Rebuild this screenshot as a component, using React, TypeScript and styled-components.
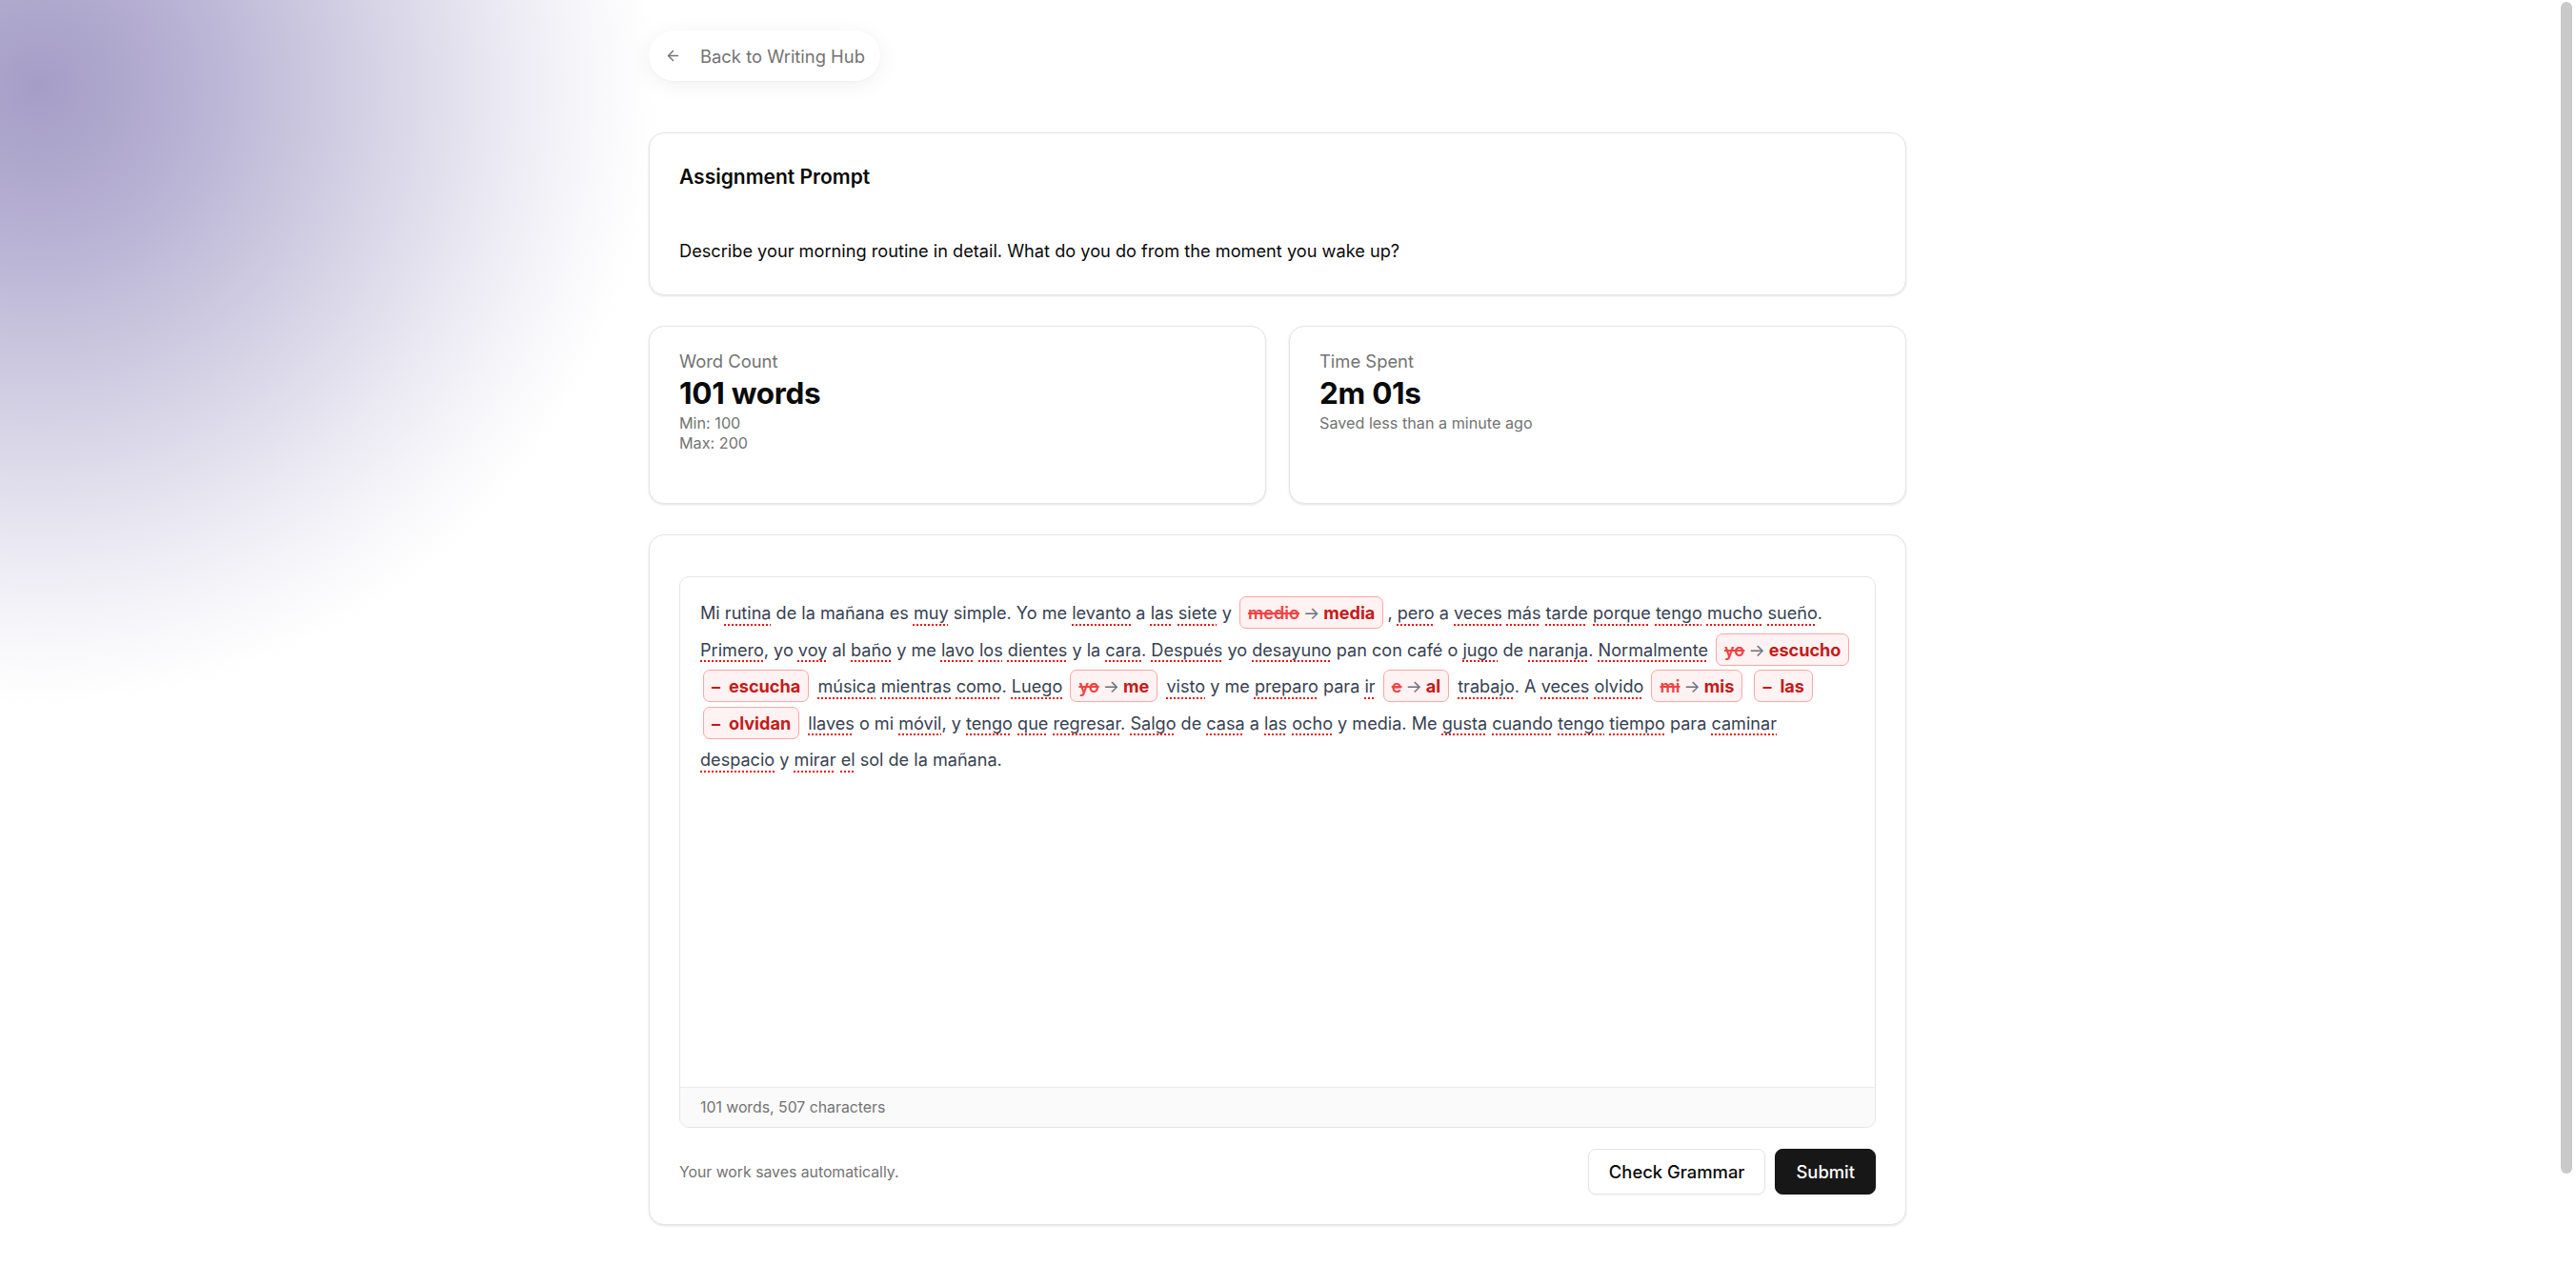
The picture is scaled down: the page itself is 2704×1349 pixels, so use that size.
import React from 'react';
import styled, {createGlobalStyle} from 'styled-components';
import {ArrowLeft} from 'lucide-react';

const GlobalStyle = createGlobalStyle`
    html, body {
        margin: 0;
        padding: 0;
    }
    body {
        font-family: Inter, "Noto Sans", sans-serif;
        color: #0a0a0a;
        background: #fff;
        -webkit-font-smoothing: antialiased;
    }
    * {
        box-sizing: border-box;
    }
`

// essay text: *word* = flagged word, [a>b] = replacement, [-b] = missing word
const ESSAY = 'Mi *rutina* de la mañana es *muy* simple. Yo me *levanto* a *las* *siete* y [medio>media], *pero* a *veces* *más* *tarde* *porque* *tengo* *mucho* *sueño*. *Primero*, yo *voy* al *baño* y me *lavo* *los* *dientes* y la *cara*. *Después* yo *desayuno* pan con café o *jugo* de *naranja*. *Normalmente* [yo>escucho] [-escucha] *música* *mientras* *como*. *Luego* [yo>me] *visto* y me *preparo* para *ir* [e>al] *trabajo*. A *veces* *olvido* [mi>mis] [-las] [-olvidan] *llaves* o mi *móvil*, y *tengo* *que* *regresar*. *Salgo* de *casa* a *las* *ocho* y media. Me *gusta* *cuando* *tengo* *tiempo* para *caminar* *despacio* y *mirar* *el* sol de la mañana.'

const renderEssay = (text: string) =>
    text.split(/(\*[^*]+\*|\[[^\]]+\])/).map((part, i) => {
        if (part.startsWith('*')) {
            return <Marked key={i}>{part.slice(1, -1)}</Marked>
        }
        if (part.startsWith('[')) {
            const body = part.slice(1, -1)
            if (body.startsWith('-')) {
                return (
                    <Chip key={i}>
                        <Dash>–</Dash>
                        <Fix>{body.slice(1)}</Fix>
                    </Chip>
                )
            }
            const [from, to] = body.split('>')
            return (
                <Chip key={i}>
                    <Strike>{from}</Strike>
                    <Arrow>→</Arrow>
                    <Fix>{to}</Fix>
                </Chip>
            )
        }
        return <React.Fragment key={i}>{part}</React.Fragment>
    })

export default function App() {
    return (
        <>
            <GlobalStyle/>
            <Page>
                <Container>
                    <BackButton>
                        <ArrowLeft size={17} strokeWidth={2}/>
                        Back to Writing Hub
                    </BackButton>

                    <Card>
                        <PromptBody>
                            <CardTitle>Assignment Prompt</CardTitle>
                            <PromptText>
                                Describe your morning routine in detail. What do you do from the moment you wake up?
                            </PromptText>
                        </PromptBody>
                    </Card>

                    <StatsGrid>
                        <StatCard>
                            <StatLabel>Word Count</StatLabel>
                            <StatValue>101 words</StatValue>
                            <StatNote>Min: 100</StatNote>
                            <StatNote>Max: 200</StatNote>
                        </StatCard>
                        <StatCard>
                            <StatLabel>Time Spent</StatLabel>
                            <StatValue>2m 01s</StatValue>
                            <StatNote>Saved less than a minute ago</StatNote>
                        </StatCard>
                    </StatsGrid>

                    <Card>
                        <EditorBody>
                            <EditorBox>
                                <EditorText>{renderEssay(ESSAY)}</EditorText>
                                <EditorFooter>101 words, 507 characters</EditorFooter>
                            </EditorBox>
                            <ActionRow>
                                <AutoSave>Your work saves automatically.</AutoSave>
                                <Buttons>
                                    <Button>Check Grammar</Button>
                                    <Button primary>Submit</Button>
                                </Buttons>
                            </ActionRow>
                        </EditorBody>
                    </Card>
                </Container>
                <ScrollThumb/>
            </Page>
        </>
    )
}

const Page = styled.div`
    min-height: 100vh;
    padding: 32px 22px 192px 0;
    background: radial-gradient(circle 650px at 40px 90px,
        #a59dc6 0%,
        #b8b2d4 25%,
        #d3d0e4 52%,
        #eae8f2 74%,
        #f8f8fb 90%,
        #ffffff 100%) no-repeat;
`

// overlay scrollbar thumb seen at the right edge of the window
const ScrollThumb = styled.div`
    position: fixed;
    top: 2px;
    right: 4px;
    width: 12px;
    height: 1230px;
    border-radius: 6px;
    background: #c9c9c9;
`

const Container = styled.main`
    width: 1320px;
    margin: 0 auto;
    display: flex;
    flex-direction: column;
    gap: 32px;
`

const BackButton = styled.button`
    align-self: flex-start;
    display: inline-flex;
    align-items: center;
    gap: 20px;
    height: 53px;
    padding: 0 16px 0 17px;
    margin-bottom: 22px;
    border: none;
    border-radius: 999px;
    background: #fff;
    box-shadow: 0 4px 24px rgba(0, 0, 0, 0.06), 0 1px 3px rgba(0, 0, 0, 0.03);
    font-family: inherit;
    font-size: 18.4px;
    color: #737373;
    cursor: pointer;
`

const Card = styled.section`
    background: #fff;
    border: 1px solid #e5e5e5;
    border-radius: 16px;
    box-shadow: 0 1px 3px rgba(0, 0, 0, 0.08), 0 1px 2px rgba(0, 0, 0, 0.04);
`

const PromptBody = styled.div`
    padding: 33px 31px 33px;
`

const CardTitle = styled.h2`
    margin: 0;
    font-size: 21px;
    line-height: 26px;
    font-weight: 600;
    color: #0a0a0a;
`

const PromptText = styled.p`
    margin: 51px 0 0;
    font-size: 18.2px;
    line-height: 26px;
    color: #0a0a0a;
`

const StatsGrid = styled.div`
    display: grid;
    grid-template-columns: 1fr 1fr;
    gap: 24px;
`

const StatCard = styled(Card)`
    min-height: 187px;
    padding: 23px 31px;
`

const StatLabel = styled.div`
    font-size: 18.4px;
    line-height: 26px;
    color: #737373;
`

const StatValue = styled.div`
    font-size: 31.5px;
    line-height: 42px;
    font-weight: 700;
    letter-spacing: -0.3px;
    color: #0a0a0a;
`

const StatNote = styled.div`
    font-size: 16.2px;
    line-height: 21px;
    color: #737373;
`

const EditorBody = styled.div`
    padding: 43px 31px 31px;
`

const EditorBox = styled.div`
    border: 1px solid #e5e5e5;
    border-radius: 10px;
    overflow: hidden;
`

const EditorText = styled.div`
    min-height: 535px;
    padding: 18px 21px;
    font-size: 18.1px;
    line-height: 38.5px;
    color: #374151;
`

const Marked = styled.span`
    text-decoration: underline dotted #f01010;
    text-decoration-thickness: 2px;
    text-underline-offset: 5px;
`

const Chip = styled.span`
    display: inline-flex;
    align-items: center;
    gap: 4px;
    height: 34px;
    padding: 0 8px;
    margin: 0 4px 0 3px;
    border: 1px solid #fca5a5;
    border-radius: 7px;
    background: #fef2f2;
    line-height: 1;
`

const Strike = styled.span`
    color: #ef4444;
    font-weight: 600;
    text-decoration: line-through;
    text-decoration-thickness: 2px;
`

const Arrow = styled.span`
    color: #6b7280;
`

const Fix = styled.span`
    color: #c51a1a;
    font-weight: 700;
`

const Dash = styled(Fix)`
    margin-right: 5px;
`

const EditorFooter = styled.div`
    padding: 10px 21px;
    border-top: 1px solid #ececec;
    background: #fafafa;
    font-size: 15.8px;
    line-height: 21px;
    color: #737373;
`

const ActionRow = styled.div`
    display: flex;
    align-items: center;
    justify-content: space-between;
    margin-top: 22px;
`

const AutoSave = styled.span`
    font-size: 15.8px;
    color: #737373;
`

const Buttons = styled.div`
    display: flex;
    gap: 10px;
`

const Button = styled.button<{ primary?: boolean }>`
    height: 48px;
    padding: 0 21px;
    border-radius: 8px;
    border: 1px solid ${p => p.primary ? '#171717' : '#e5e5e5'};
    background: ${p => p.primary ? '#171717' : '#fff'};
    color: ${p => p.primary ? '#fff' : '#0a0a0a'};
    box-shadow: 0 1px 2px rgba(0, 0, 0, 0.05);
    font-family: inherit;
    font-size: 18.4px;
    font-weight: 500;
    cursor: pointer;
`
